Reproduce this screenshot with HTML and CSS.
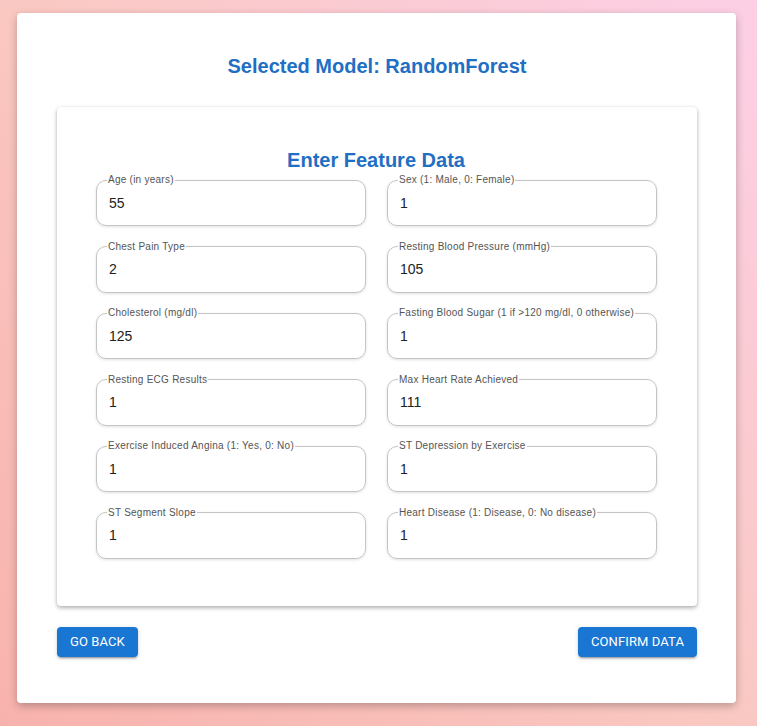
FILE: index.html
```html
<!DOCTYPE html>
<html lang="en">
<head>
<meta charset="utf-8">
<title>Enter Feature Data</title>
<link rel="stylesheet" href="styles.css">
</head>
<body>
<main class="page">
  <section class="card">
    <h1 class="model-title">Selected Model: RandomForest</h1>
    <div class="form-card">
      <h2 class="form-title">Enter Feature Data</h2>
      <div class="grid">
        <fieldset class="field"><legend>Age (in years)</legend><input value="55"></fieldset>
        <fieldset class="field"><legend>Sex (1: Male, 0: Female)</legend><input value="1"></fieldset>
        <fieldset class="field"><legend>Chest Pain Type</legend><input value="2"></fieldset>
        <fieldset class="field"><legend>Resting Blood Pressure (mmHg)</legend><input value="105"></fieldset>
        <fieldset class="field"><legend>Cholesterol (mg/dl)</legend><input value="125"></fieldset>
        <fieldset class="field"><legend>Fasting Blood Sugar (1 if &gt;120 mg/dl, 0 otherwise)</legend><input value="1"></fieldset>
        <fieldset class="field"><legend>Resting ECG Results</legend><input value="1"></fieldset>
        <fieldset class="field"><legend>Max Heart Rate Achieved</legend><input value="111"></fieldset>
        <fieldset class="field"><legend>Exercise Induced Angina (1: Yes, 0: No)</legend><input value="1"></fieldset>
        <fieldset class="field"><legend>ST Depression by Exercise</legend><input value="1"></fieldset>
        <fieldset class="field"><legend>ST Segment Slope</legend><input value="1"></fieldset>
        <fieldset class="field"><legend>Heart Disease (1: Disease, 0: No disease)</legend><input value="1"></fieldset>
      </div>
    </div>
    <div class="actions">
      <button class="btn">Go Back</button>
      <button class="btn">Confirm Data</button>
    </div>
  </section>
</main>
</body>
</html>
```
FILE: styles.css
```css
html, body {
  margin: 0;
  height: 100%;
}
body {
  background: linear-gradient(45deg, #f8b2ad 0%, #fac8c2 50%, #fccfe6 100%);
  font-family: "Liberation Sans", Arial, sans-serif;
}
.page {
  padding: 13px 21px 23px 17px;
}
.card {
  background: #fff;
  border-radius: 4px;
  box-shadow: 0 3px 8px rgba(0, 0, 0, 0.25);
  padding: 40px 39px 46px 40px;
}
.model-title {
  margin: 0;
  text-align: center;
  color: #1f6fc4;
  font-size: 20px;
  line-height: 26px;
  font-weight: bold;
}
.form-card {
  margin-top: 28px;
  background: #fff;
  border-radius: 4px;
  box-shadow: 0 2px 4px rgba(0, 0, 0, 0.3), 0 0 2px rgba(0, 0, 0, 0.08);
  padding: 41px 41px 47px 39px;
}
.form-title {
  margin: 0 0 2px;
  text-align: center;
  color: #1f6fc4;
  font-size: 20px;
  line-height: 24px;
  font-weight: bold;
}
.grid {
  display: grid;
  grid-template-columns: 270px 270px;
  column-gap: 21px;
  row-gap: 14.6px;
}
.field {
  margin: 0;
  border: 1px solid #c4c4c4;
  border-radius: 10px;
  padding: 0 10px;
  height: 52px;
  box-sizing: border-box;
  box-shadow: 0 1px 3px rgba(0, 0, 0, 0.12);
  min-width: 0;
}
.field legend {
  font-size: 10px;
  line-height: 12px;
  color: #555;
  padding: 0 1px;
  letter-spacing: 0.25px;
}
.field input {
  display: block;
  border: 0;
  outline: none;
  background: transparent;
  width: 100%;
  padding: 0 0 0 2px;
  margin: 0;
  height: 33px;
  font-family: "Liberation Sans", Arial, sans-serif;
  font-size: 14px;
  color: #222;
}
.actions {
  display: flex;
  justify-content: space-between;
  margin-top: 21px;
}
.btn {
  background: #1976d2;
  color: #fff;
  border: 0;
  border-radius: 4px;
  font-family: Roboto, "Liberation Sans", sans-serif;
  font-weight: 400;
  font-size: 13px;
  letter-spacing: 0.1px;
  text-transform: uppercase;
  line-height: 22px;
  padding: 4px 13px;
  box-shadow: 0 3px 1px -2px rgba(0,0,0,.2), 0 2px 2px 0 rgba(0,0,0,.14), 0 1px 5px 0 rgba(0,0,0,.12);
}
```
